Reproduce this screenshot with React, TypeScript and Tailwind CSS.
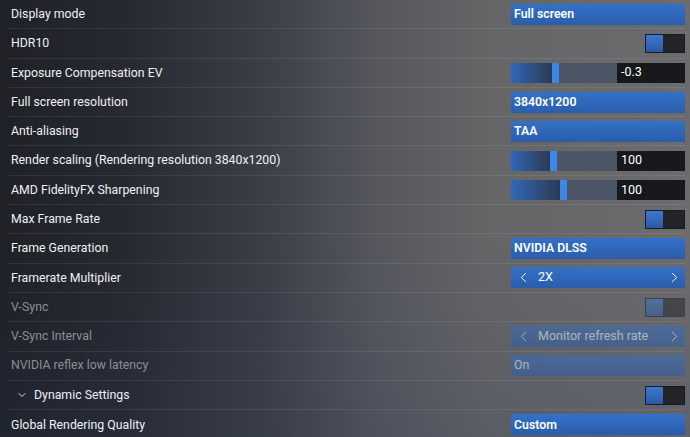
import { ChevronDown, ChevronLeft, ChevronRight } from 'lucide-react';

type Row =
  | { label: string; kind: 'select'; value: string; disabled?: boolean }
  | { label: string; kind: 'toggle'; disabled?: boolean; chevron?: boolean }
  | { label: string; kind: 'slider'; value: string; pos: number }
  | { label: string; kind: 'cycle'; value: string; disabled?: boolean };

const rows: Row[] = [
  { label: 'Display mode', kind: 'select', value: 'Full screen' },
  { label: 'HDR10', kind: 'toggle' },
  { label: 'Exposure Compensation EV', kind: 'slider', value: '-0.3', pos: 41 },
  { label: 'Full screen resolution', kind: 'select', value: '3840x1200' },
  { label: 'Anti-aliasing', kind: 'select', value: 'TAA' },
  { label: 'Render scaling (Rendering resolution 3840x1200)', kind: 'slider', value: '100', pos: 39 },
  { label: 'AMD FidelityFX Sharpening', kind: 'slider', value: '100', pos: 49 },
  { label: 'Max Frame Rate', kind: 'toggle' },
  { label: 'Frame Generation', kind: 'select', value: 'NVIDIA DLSS' },
  { label: 'Framerate Multiplier', kind: 'cycle', value: '2X' },
  { label: 'V-Sync', kind: 'toggle', disabled: true },
  { label: 'V-Sync Interval', kind: 'cycle', value: 'Monitor refresh rate', disabled: true },
  { label: 'NVIDIA reflex low latency', kind: 'select', value: 'On', disabled: true },
  { label: 'Dynamic Settings', kind: 'toggle', chevron: true },
  { label: 'Global Rendering Quality', kind: 'select', value: 'Custom' },
];

function Toggle() {
  return (
    <div className="ml-auto flex h-[19px] w-[40px] border border-[#1a1b1e] bg-[#232428]">
      <div className="h-full w-[17px] bg-gradient-to-b from-[#3a78d0] to-[#2a5aa6]" />
    </div>
  );
}

function Control({ row, disabled }: { row: Row; disabled: boolean }) {
  if (row.kind === 'toggle') return <Toggle />;
  if (row.kind === 'slider') {
    return (
      <div className="flex h-[20px] w-full">
        <div className="relative h-full w-[106px] bg-[#4c5565]">
          <div
            className="h-full bg-gradient-to-r from-[#2f67b9] to-[#2b3a52]"
            style={{ width: `${row.pos}px` }}
          />
          <div
            className="absolute top-0 h-full w-[7px] bg-[#3b88ea]"
            style={{ left: `${row.pos}px` }}
          />
        </div>
        <div className="flex flex-1 items-center bg-[#16181c] pl-[4px] text-[12.5px] text-white">
          {row.value}
        </div>
      </div>
    );
  }
  if (row.kind === 'cycle') {
    return (
      <div className="flex h-[21px] w-full items-center bg-gradient-to-b from-[#3471c8] to-[#2a5dab] pl-[4px] pr-[2px] text-[12.5px] text-white">
        <ChevronLeft size={17} strokeWidth={1.4} />
        <span className="ml-[6px]">{row.value}</span>
        <ChevronRight size={17} strokeWidth={1.4} className="ml-auto" />
      </div>
    );
  }
  return (
    <div
      className={`flex h-[21px] w-full items-center bg-gradient-to-b from-[#3471c8] to-[#2a5dab] pl-[3px] text-[12.3px] text-white ${
        disabled ? 'font-normal' : 'font-semibold'
      }`}
    >
      {row.value}
    </div>
  );
}

export default function App() {
  return (
    <div
      className="relative h-[437px] w-[690px] overflow-hidden bg-[linear-gradient(90deg,#1f2127_0%,#262930_18%,#3b3e46_38%,#56585e_55%,#656567_70%,#6c6c6e_100%)]"
      style={{ fontFamily: 'Roboto, "Noto Sans", sans-serif' }}
    >
      <div className="pointer-events-none absolute inset-0 bg-[linear-gradient(180deg,rgba(0,0,0,0)_0%,rgba(0,0,0,0)_55%,rgba(40,55,90,0.18)_100%)]" />
      <div className="relative flex flex-col pl-[8px] pr-[5px]">
        {rows.map((row) => {
          const disabled = Boolean('disabled' in row && row.disabled);
          const chevron = row.kind === 'toggle' && row.chevron;
          return (
            <div
              key={row.label}
              className="flex h-[29.3px] items-center border-b border-white/[0.08] last:border-b-0"
            >
              <div
                className={`flex flex-1 items-center pl-[3px] text-[12.3px] ${
                  disabled ? 'text-[#8c8e94]' : 'text-[#eef0f3]'
                }`}
              >
                {chevron && (
                  <ChevronDown size={12} strokeWidth={1.8} className="ml-[5px] mr-[6px]" />
                )}
                {row.label}
              </div>
              <div className={`flex w-[174px] items-center ${disabled ? 'opacity-50' : ''}`}>
                <Control row={row} disabled={disabled} />
              </div>
            </div>
          );
        })}
      </div>
    </div>
  );
}
